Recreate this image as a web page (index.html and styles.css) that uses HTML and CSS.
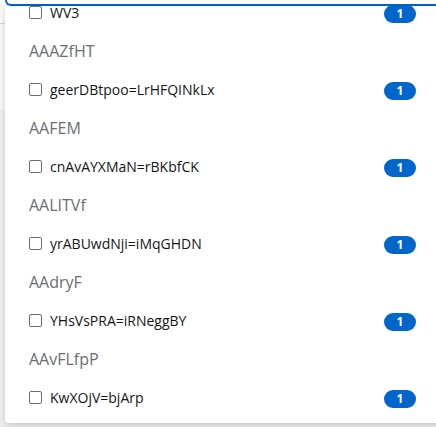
FILE: index.html
```html
<!DOCTYPE html>
<html>
<head>
<meta charset="utf-8">
<link rel="stylesheet" href="styles.css">
</head>
<body>
<div class="backdrop">
  <div class="backdrop-top"></div>
  <div class="backdrop-mid"></div>
</div>
<div class="select">
  <div class="toggle"></div>
  <div class="menu">
    <div class="list">
      <div class="item"><span class="check"></span><span class="label">WV3</span><span class="badge">1</span></div>
      <div class="group-title">AAAZfHT</div>
      <div class="item"><span class="check"></span><span class="label">geerDBtpoo=LrHFQINkLx</span><span class="badge">1</span></div>
      <div class="group-title">AAFEM</div>
      <div class="item"><span class="check"></span><span class="label">cnAvAYXMaN=rBKbfCK</span><span class="badge">1</span></div>
      <div class="group-title">AALITVf</div>
      <div class="item"><span class="check"></span><span class="label">yrABUwdNji=iMqGHDN</span><span class="badge">1</span></div>
      <div class="group-title">AAdryF</div>
      <div class="item"><span class="check"></span><span class="label">YHsVsPRA=iRNeggBY</span><span class="badge">1</span></div>
      <div class="group-title">AAvFLfpP</div>
      <div class="item"><span class="check"></span><span class="label">KwXOjV=bjArp</span><span class="badge">1</span></div>
    </div>
  </div>
</div>
</body>
</html>
```
FILE: styles.css
```css
html, body {
  margin: 0;
  padding: 0;
  width: 436px;
  height: 427px;
  overflow: hidden;
  background: #efefef;
  font-family: "Open Sans", sans-serif;
}
.backdrop {
  position: absolute;
  left: 0;
  top: 0;
  width: 436px;
}
.backdrop-top {
  height: 23px;
  background: #fafafa;
  border-bottom: 1px solid #d2d2d2;
}
.backdrop-mid {
  height: 86px;
  background: #f8f8f8;
}
.select {
  position: relative;
  margin-left: 5px;
  width: 440px;
}
.toggle {
  height: 4px;
  border-left: 2px solid #0066cc;
  border-bottom: 2px solid #0066cc;
  border-bottom-left-radius: 6px;
  background: #fff;
}
.menu {
  height: 417px;
  overflow: hidden;
  background: #fff;
  border-bottom-left-radius: 3px;
  box-shadow: 0 4px 8px rgba(3, 3, 3, 0.12), 0 0 4px rgba(3, 3, 3, 0.06);
}
.list {
  margin-top: -12px;
  width: 431px;
}
.item {
  display: flex;
  align-items: center;
  height: 37px;
  padding: 0 20px 0 24px;
  font-size: 14px;
  color: #151515;
}
.check {
  width: 11px;
  height: 11px;
  border: 1px solid #6a6e73;
  border-radius: 2px;
  margin-right: 8px;
  flex: none;
}
.label {
  flex: 1;
}
.badge {
  flex: none;
  width: 32px;
  height: 18px;
  line-height: 18px;
  border-radius: 30em;
  background: #0066cc;
  color: #fff;
  font-size: 12px;
  font-weight: 700;
  text-align: center;
  margin-top: 2px;
}
.group-title {
  height: 40px;
  line-height: 40px;
  padding-left: 24px;
  font-size: 16px;
  color: #6a6e73;
}
```
